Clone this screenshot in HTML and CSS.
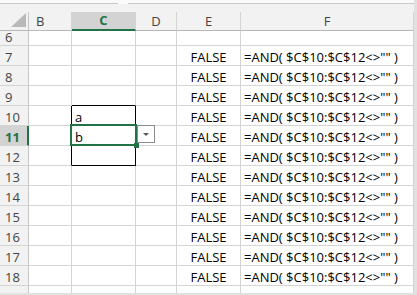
FILE: index.html
```html
<!DOCTYPE html>
<html>
<head>
  <meta charset="UTF-8" />
  <title>Sheet</title>
  <link rel="stylesheet" href="styles.css">
</head>

<body>
  <div class="window">
    <div class="sheet">
      <div class="fxbar">
        <span class="namebox"></span>
        <span class="formula"></span>
      </div>
      <div class="band"></div>

      <div class="grid" id="grid">
        <div class="hd corner">
          <svg width="28" height="18" viewBox="0 0 28 18">
            <polygon points="11,15 26,15 26,1" fill="#b9b9b9" />
          </svg>
        </div>
        <div class="hd col col-b">B</div>
        <div class="hd col sel-col">C</div>
        <div class="hd col">D</div>
        <div class="hd col">E</div>
        <div class="hd col">F</div>
      </div>
    </div>
  </div>

  <script>
    const grid = document.getElementById("grid");
    const formula = '=AND( $C$10:$C$12<>"" )';

    for (let r = 6; r <= 19; r++) {
      const hasValue = r >= 7 && r <= 18;
      const cells = [
        { cls: "rh" + (r === 11 ? " sel-row" : ""), text: r },
        { cls: "c" + (r >= 10 && r <= 12 ? " edge-r" : ""), text: "" },
        { cls: "c txt" + (r >= 10 && r <= 12 ? " edge-r" : "") + (r === 9 || r === 12 ? " edge-b" : "") + (r === 11 ? " active" : ""),
          text: r === 10 ? "a" : r === 11 ? "b" : "" },
        { cls: "c", text: "" },
        { cls: "c bool", text: hasValue ? "FALSE" : "" },
        { cls: "c txt", text: hasValue ? formula : "" },
      ];

      cells.forEach(c => {
        const el = document.createElement("div");
        el.className = c.cls;
        el.textContent = c.text;
        grid.appendChild(el);
      });
    }

    // selection box, fill handle and list button on C11
    const active = grid.querySelector(".active");
    active.insertAdjacentHTML("beforeend",
      '<span class="selbox"></span><span class="handle"></span>' +
      '<span class="dropdown"><i class="arrow"></i></span>');
  </script>
</body>
</html>
```
FILE: styles.css
```css
html, body {
  margin: 0;
  height: 100%;
}

body {
  font-family: "Open Sans", "Liberation Sans", sans-serif;
  font-size: 13px;
  color: #000;
  background: #e2e0e2;
}

.window {
  width: 417px;
  height: 295px;
  background: #e2e0e2;
}

.sheet {
  width: 414px;
  height: 293px;
  overflow: hidden;
  background: #fff;
}

.fxbar {
  display: flex;
  height: 4px;
  gap: 10px;
  background: #fafafa;
}

.namebox,
.formula {
  box-sizing: border-box;
  height: 4px;
  border-bottom: 1px solid #c8c8c8;
}

.namebox {
  width: 118px;
}

.formula {
  flex: 1;
}

.band {
  height: 8px;
  background: #f2f2f2;
}

.grid {
  display: grid;
  grid-template-columns: 29px 43px 64px 41px 64px 173px;
  grid-template-rows: 19px 15px;
  grid-auto-rows: 20px;
}

.grid > div {
  box-sizing: border-box;
  display: flex;
  align-items: flex-end;
  line-height: 16px;
  white-space: nowrap;
  border-right: 1px solid #d4d4d4;
  border-bottom: 1px solid #d4d4d4;
}

/* headers */
.hd {
  background: #f2f2f2;
  color: #444;
  padding-bottom: 1px;
  border-bottom-color: #b7b7b7 !important;
}

.corner {
  border-right-color: #c6c6c6 !important;
  padding-bottom: 0;
}

.col {
  justify-content: center;
}

.col-b {
  justify-content: flex-start;
  padding-left: 7px;
}

.sel-col {
  background: #d3d3d3;
  color: #217346;
  font-weight: bold;
  border-bottom: 2px solid #217346 !important;
}

.rh {
  background: #f2f2f2;
  color: #444;
  padding-left: 5px;
  border-right-color: #c6c6c6 !important;
}

.sel-row {
  background: #d3d3d3;
  color: #217346;
  font-weight: bold;
  border-right: 2px solid #217346 !important;
}

/* cells */
.txt {
  padding-left: 3px;
}

.bool {
  justify-content: center;
}

.edge-r {
  border-right-color: #000 !important;
}

.edge-b {
  border-bottom-color: #000 !important;
}

.active {
  position: relative;
}

.selbox {
  position: absolute;
  left: -2px;
  top: -2px;
  width: 67px;
  height: 22px;
  box-sizing: border-box;
  border: 2px solid #217346;
}

.handle {
  position: absolute;
  left: 62px;
  top: 17px;
  width: 5px;
  height: 5px;
  background: #217346;
}

.dropdown {
  position: absolute;
  left: 65px;
  top: -1px;
  width: 18px;
  height: 18px;
  box-sizing: border-box;
  border: 1px solid #8c8c8c;
  background: #fff;
  display: flex;
  align-items: center;
  justify-content: center;
}

.arrow {
  width: 0;
  height: 0;
  margin-top: 1px;
  border-left: 3px solid transparent;
  border-right: 3px solid transparent;
  border-top: 3px solid #595959;
}
```
